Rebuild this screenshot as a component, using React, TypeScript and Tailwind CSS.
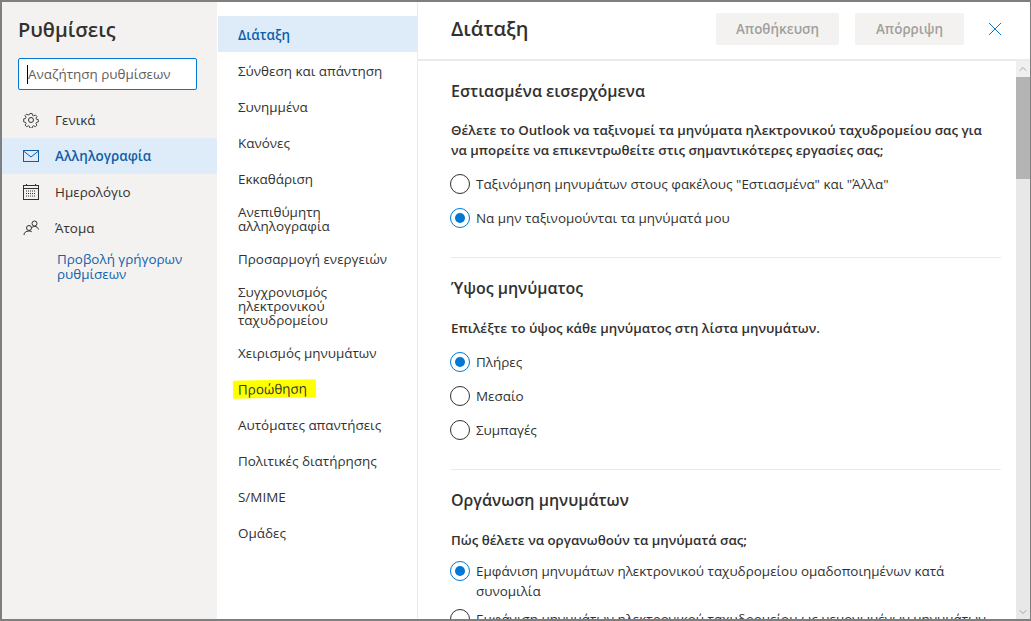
import { ChevronDown, ChevronUp } from "lucide-react";

const subNav = [
  "Διάταξη",
  "Σύνθεση και απάντηση",
  "Συνημμένα",
  "Κανόνες",
  "Εκκαθάριση",
  "Ανεπιθύμητη αλληλογραφία",
  "Προσαρμογή ενεργειών",
  "Συγχρονισμός ηλεκτρονικού ταχυδρομείου",
  "Χειρισμός μηνυμάτων",
  "Προώθηση",
  "Αυτόματες απαντήσεις",
  "Πολιτικές διατήρησης",
  "S/MIME",
  "Ομάδες",
];

function GearIcon() {
  return (
    <svg width="16" height="16" viewBox="0 0 16 16" fill="none" stroke="#323130" strokeWidth="1">
      <circle cx="8" cy="8" r="2.5" />
      <path d="M6.7 .8h2.6l.4 2 1.4.6 1.7-1.1 1.8 1.8-1.1 1.7.6 1.4 2 .4v2.6l-2 .4-.6 1.4 1.1 1.7-1.8 1.8-1.7-1.1-1.4.6-.4 2H6.7l-.4-2-1.4-.6-1.7 1.1-1.8-1.8 1.1-1.7-.6-1.4-2-.4V6.7l2-.4.6-1.4L1.4 3.2l1.8-1.8 1.7 1.1 1.4-.6z" transform="translate(.8 .8) scale(.9)" />
    </svg>
  );
}

function MailIcon() {
  return (
    <svg width="16" height="12" viewBox="0 0 16 12" fill="none" stroke="#0f5fa8" strokeWidth="1">
      <rect x=".5" y=".5" width="15" height="11" />
      <path d="M.5 1 8 7l7.5-6" />
    </svg>
  );
}

function CalendarIcon() {
  return (
    <svg width="16" height="16" viewBox="0 0 16 16" fill="none" stroke="#323130" strokeWidth="1">
      <rect x=".5" y="1.5" width="15" height="14" />
      <path d="M.5 4.5h15M3.5 0v2M12.5 0v2" />
      <path d="M3 7h10M3 9.5h10M3 12h10" strokeDasharray="1 1" />
    </svg>
  );
}

function PeopleIcon() {
  return (
    <svg width="16" height="16" viewBox="0 0 16 16" fill="none" stroke="#323130" strokeWidth="1">
      <circle cx="6" cy="8" r="2.5" />
      <circle cx="11.5" cy="3.5" r="2.5" />
      <path d="M1 15c0-2.5 2-4 5-4 1.5 0 2.5.5 3 1M9 7.5c1-1 2-1 3-1 1.5 0 3 1 3.5 3" />
    </svg>
  );
}

function NavItem({ icon, label, active }: { icon: React.ReactNode; label: string; active?: boolean }) {
  return (
    <div className={`flex h-9 items-center ${active ? "bg-[#deecf9] font-semibold text-[#0f5fa8]" : "text-[#323130]"}`}>
      <div className="flex w-[53px] justify-center pl-1">{icon}</div>
      <span>{label}</span>
    </div>
  );
}

function Radio({ checked, label, twoLine }: { checked?: boolean; label: string; twoLine?: boolean }) {
  return (
    <div className={`-ml-px flex gap-[6px] ${twoLine ? "items-start" : "items-center"}`}>
      <div
        className={`flex h-[20px] w-[20px] shrink-0 items-center justify-center rounded-full border ${
          checked ? "border-[#0078d4]" : "border-[#323130]"
        }`}
      >
        {checked && <div className="h-[10px] w-[10px] rounded-full bg-[#0078d4]" />}
      </div>
      <span className="leading-[20px] text-[#323130]">{label}</span>
    </div>
  );
}

export default function App() {
  return (
    <div className="flex h-[621px] w-[1031px] overflow-hidden border-y-[2px] border-r border-l-[2px] border-[#7f7f7f] bg-white font-['Open_Sans','Noto_Sans',sans-serif] text-[13.45px] text-[#323130]">
      {/* left nav */}
      <div className="w-[215px] shrink-0 bg-[#f3f2f1]">
        <h1 className="ml-[16px] mt-[13px] text-[20px] font-semibold leading-[30px]">Ρυθμίσεις</h1>
        <div className="mb-[12px] ml-[16px] mt-[13px] flex h-[32px] w-[179px] items-center rounded-[2px] border border-[#0078d4] bg-white pl-[9px] text-[#605e5c]">
          <span className="-ml-px mr-0 h-[19px] w-px bg-black" />
          Αναζήτηση ρυθμίσεων
        </div>
        <NavItem icon={<GearIcon />} label="Γενικά" />
        <NavItem icon={<MailIcon />} label="Αλληλογραφία" active />
        <NavItem icon={<CalendarIcon />} label="Ημερολόγιο" />
        <NavItem icon={<PeopleIcon />} label="Άτομα" />
        <div className="ml-[55px] mt-[6px] w-[150px] leading-[15px] text-[#0f62ad]">Προβολή γρήγορων ρυθμίσεων</div>
      </div>

      {/* sub nav */}
      <div className="ml-px w-[200px] shrink-0 border-r border-[#edebe9] pt-[14px]">
        {subNav.map((item, i) => (
          <div
            key={item}
            className={`flex min-h-9 items-center px-[20px] pb-[7px] pt-[9px] leading-[14px] ${
              i === 0 ? "bg-[#deecf9] font-semibold text-[#0f5fa8]" : ""
            }`}
          >
            {item === "Προώθηση" ? (
              <span className="-mx-[5px] -rotate-1 bg-[#ffff00] px-[5px] py-[2px] pr-[9px]">{item}</span>
            ) : (
              item
            )}
          </div>
        ))}
      </div>

      {/* content */}
      <div className="flex min-w-0 flex-1 flex-col">
        <div className="flex h-[59px] shrink-0 items-center border-b-2 border-[#edebe9] pb-[3px] pl-[33px]">
          <h2 className="flex-1 text-[20px] font-semibold leading-none">Διάταξη</h2>
          <button className="h-[32px] w-[123px] rounded-[2px] bg-[#f3f2f1] font-semibold text-[#a19f9d]">Αποθήκευση</button>
          <button className="ml-[16px] h-[32px] w-[109px] rounded-[2px] bg-[#f3f2f1] font-semibold text-[#a19f9d]">Απόρριψη</button>
          <div className="ml-[24px] mr-[28px]">
            <svg width="14" height="14" viewBox="0 0 14 14" stroke="#0078d4" strokeWidth="1" fill="none">
              <path d="M1 1l12 12M13 1 1 13" />
            </svg>
          </div>
        </div>

        <div className="flex min-h-0 flex-1">
          <div className="min-w-0 flex-1 overflow-hidden pl-[33px] pr-[15px]">
            <h3 className="mt-[19px] text-[16px] font-semibold leading-[22px]">Εστιασμένα εισερχόμενα</h3>
            <p className="mt-[18px] max-w-[535px] text-[13.3px] font-semibold leading-[20px]">
              Θέλετε το Outlook να ταξινομεί τα μηνύματα ηλεκτρονικού ταχυδρομείου σας για να μπορείτε να επικεντρωθείτε στις σημαντικότερες εργασίες σας;
            </p>
            <div className="mt-[14px] flex flex-col gap-[14px]">
              <Radio label={'Ταξινόμηση μηνυμάτων στους φακέλους "Εστιασμένα" και "Άλλα"'} />
              <Radio checked label="Να μην ταξινομούνται τα μηνύματά μου" />
            </div>
            <div className="mt-[29px] border-t border-[#edebe9]" />

            <h3 className="mt-[19px] text-[16px] font-semibold leading-[22px]">Ύψος μηνύματος</h3>
            <p className="mt-[19px] text-[13.3px] font-semibold leading-[20px]">Επιλέξτε το ύψος κάθε μηνύματος στη λίστα μηνυμάτων.</p>
            <div className="mt-[14px] flex flex-col gap-[14px]">
              <Radio checked label="Πλήρες" />
              <Radio label="Μεσαίο" />
              <Radio label="Συμπαγές" />
            </div>
            <div className="mt-[29px] border-t border-[#edebe9]" />

            <h3 className="mt-[19px] text-[16px] font-semibold leading-[22px]">Οργάνωση μηνυμάτων</h3>
            <p className="mt-[19px] text-[13.3px] font-semibold leading-[20px]">Πώς θέλετε να οργανωθούν τα μηνύματά σας;</p>
            <div className="mt-[11px] flex flex-col gap-[8px]">
              <Radio checked twoLine label="Εμφάνιση μηνυμάτων ηλεκτρονικού ταχυδρομείου ομαδοποιημένων κατά συνομιλία" />
              <Radio twoLine label="Εμφάνιση μηνυμάτων ηλεκτρονικού ταχυδρομείου ως μεμονωμένων μηνυμάτων" />
            </div>
          </div>

          {/* scrollbar */}
          <div className="flex w-[14px] shrink-0 flex-col bg-[#e8e8e8]">
            <div className="flex h-[16px] items-center justify-center bg-[#f0f0f0] text-[#a6a6a6]">
              <ChevronUp size={12} />
            </div>
            <div className="h-[102px] bg-[#b4b4b4]" />
            <div className="flex-1" />
            <div className="flex h-[14px] items-center justify-center text-[#a6a6a6]">
              <ChevronDown size={12} />
            </div>
          </div>
        </div>
      </div>
    </div>
  );
}
